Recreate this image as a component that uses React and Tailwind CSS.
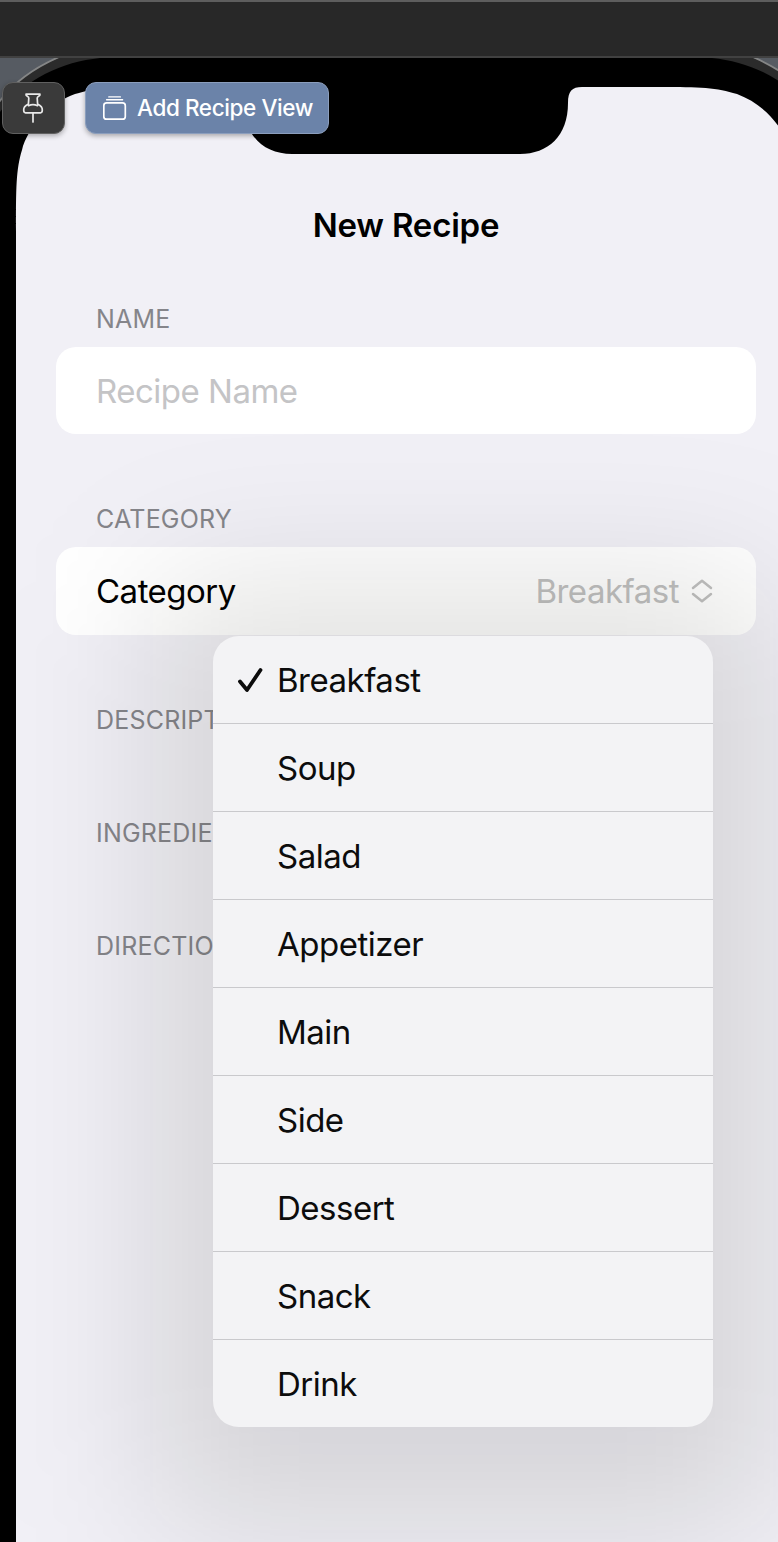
const categories = ["Breakfast", "Soup", "Salad", "Appetizer", "Main", "Side", "Dessert", "Snack", "Drink"];

function FrameCorner() {
  return (
    <>
      <path d="M0 58H100C62 62 26 78 0 112Z" fill="#2b2b2b" />
      <path d="M0 58H58C36 67 14 82 0 101Z" fill="#565b62" />
      <path d="M59 57C36 67 14 82 -1 102" stroke="#858686" strokeWidth="1.8" />
    </>
  );
}

function PhoneFrame() {
  return (
    <svg className="absolute inset-0" width="778" height="1484" viewBox="0 58 778 1484" fill="none" aria-hidden="true">
      <rect y="58" width="778" height="1484" fill="#000" />
      <FrameCorner />
      <g transform="translate(812 0) scale(-1 1)">
        <FrameCorner />
      </g>
      <path
        d="M16 1542V231C16 189 16 169 22 150L23 146C32 122 51 103 75 94L79 93C98 87 118 87 160 87H230C240 87 244 91 244 103C244 136 264 154 292 154H520C548 154 568 136 568 103C568 91 572 87 582 87H652C694 87 714 87 733 93L737 94C761 103 780 122 789 146V1542Z"
        fill="#f1f0f6"
      />
    </svg>
  );
}

function PinIcon() {
  return (
    <svg className="mr-0.5" width="24" height="32" viewBox="0 0 24 32" fill="none" stroke="#e9e9e9" strokeWidth="1.7" strokeLinecap="round" strokeLinejoin="round">
      <path d="M5 2.2H19C19.5 4.3 16.3 4.2 16.2 6L16.6 12C19.6 13.4 21.5 16 21.3 18.3Q21.2 20.8 19.5 20.8H4.5Q2.8 20.8 2.7 18.3C2.5 16 4.4 13.4 7.4 12L7.8 6C7.7 4.2 4.5 4.3 5 2.2ZM7.5 13.7Q12 11.5 16.5 13.7M12 21V30" />
    </svg>
  );
}

function StackIcon() {
  return (
    <svg width="24" height="26" viewBox="0 0 24 26" fill="none" stroke="#fff" strokeLinecap="round">
      <rect x="0.8" y="7.9" width="21.5" height="16.3" rx="2.8" strokeWidth="1.7" />
      <path d="M3.6 4.8H19.6M5.8 1.9H17.4" strokeWidth="1.4" />
    </svg>
  );
}

function SectionLabel({ children, className }) {
  return <h2 className={`pl-10 text-[25px] leading-8 font-normal tracking-[0.2px] text-[#85858a] ${className}`}>{children}</h2>;
}

export default function App() {
  return (
    <div className="flex h-[1542px] w-[778px] flex-col overflow-hidden bg-black font-['Inter',sans-serif]">
      <div className="h-[58px] shrink-0 border-t-2 border-b-2 border-t-[#5e5e5e] border-b-[#414141] bg-[#282828]" />
      <div className="relative h-[1484px] overflow-hidden">
        <PhoneFrame />
        <div className="absolute top-6 left-0.5 z-20 flex gap-5">
          <button className="flex h-[52px] w-[63px] items-center justify-center rounded-[11px] border border-[#606060] bg-[#3a3a3a] shadow-[0_2px_5px_rgba(0,0,0,0.3)]">
            <PinIcon />
          </button>
          <button className="flex h-[52px] w-[244px] items-center gap-[10px] rounded-[11px] border border-[#8b9ebd] bg-[#6b83a9] pl-[17px] text-[22.5px] font-medium tracking-[-0.4px] whitespace-nowrap text-white shadow-[0_2px_5px_rgba(0,0,0,0.3)]">
            <StackIcon />
            <span>Add Recipe View</span>
          </button>
        </div>

        <main className="relative ml-4 flex h-[1484px] w-[780px] flex-col overflow-hidden px-10 pt-[145px]">
          <h1 className="h-11 text-center text-[33px] leading-[44px] font-semibold tracking-[-0.2px] text-black">New Recipe</h1>
          <SectionLabel className="mt-14">NAME</SectionLabel>
          <div className="mt-3 flex h-[87px] items-center rounded-[20px] bg-white px-10 pt-0.5 text-[33px] tracking-[-0.5px] text-[#c4c4c6]">Recipe Name</div>
          <SectionLabel className="mt-[69px]">CATEGORY</SectionLabel>
          <div className="relative mt-3 flex h-[88px] items-center justify-between rounded-[20px] bg-white pr-10 pl-10 text-[33px] tracking-[-0.5px]">
            <span className="pt-0.5 text-black">Category</span>
            <span className="flex items-center gap-3 text-[#c0c0c0]">
              <span className="pt-0.5">Breakfast</span>
              <svg className="mr-[3px]" width="22" height="26" viewBox="0 0 22 26" fill="none" stroke="#c0c0c0" strokeWidth="2.5" strokeLinecap="round" strokeLinejoin="round">
                <path d="M2 10L11 2.8L20 10M2 16L11 23.2L20 16" />
              </svg>
            </span>
            <div className="absolute top-[33px] left-[97px] z-10 h-[950px] w-[620px] rounded-[40px] bg-[#060600]/[0.117] blur-[75px]" />
            <ul className="absolute top-[89px] left-[157px] z-10 w-[499.5px] divide-y divide-[#c9c9cc] overflow-hidden rounded-[26px] bg-[#f3f3f5] text-[#0c0c0c]">
              {categories.map((name, index) => (
                <li key={name} className={`flex items-center pl-6 ${index === 8 ? "h-[87px]" : "h-[88px]"}`}>
                  <span className="w-10">
                    {index === 0 && (
                      <svg width="27" height="28" viewBox="0 0 27 28" fill="none" stroke="#0c0c0c" strokeWidth="3.8" strokeLinecap="round" strokeLinejoin="round">
                        <path d="M3 15.5L10 24L23.5 4" />
                      </svg>
                    )}
                  </span>
                  <span className="pt-0.5">{name}</span>
                </li>
              ))}
            </ul>
          </div>
          <SectionLabel className="mt-[69px]">DESCRIPTION</SectionLabel>
          <SectionLabel className="mt-[81px]">INGREDIENTS</SectionLabel>
          <SectionLabel className="mt-[81px]">DIRECTIONS</SectionLabel>
        </main>
      </div>
    </div>
  );
}
